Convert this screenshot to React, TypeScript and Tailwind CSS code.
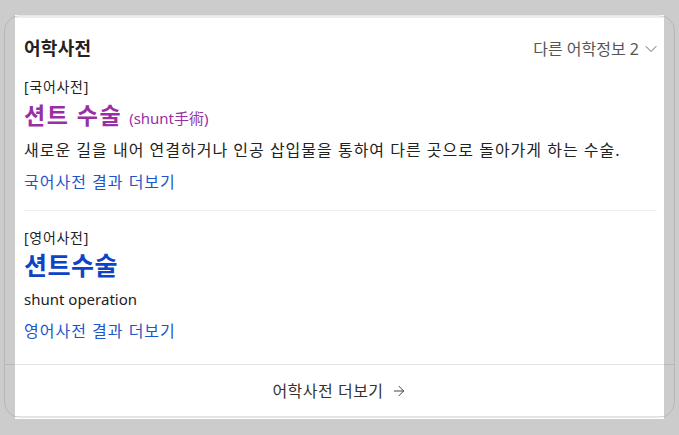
import { ChevronDown, ArrowRight } from 'lucide-react';

const font = { fontFamily: '"Noto Sans", "Noto Sans CJK KR", sans-serif' };

export default function App() {
  return (
    <div className="relative w-[679px] h-[435px] bg-[#cccccc] overflow-hidden" style={font}>
      {/* white card sitting under the rounded frame */}
      <div className="absolute left-[15px] top-[15px] w-[649px] h-[404px] bg-white">
        <div className="mt-[1px] h-[2px] bg-[#ececec]" />
        <div className="absolute left-0 right-0 bottom-[2px] h-[1px] bg-[#e3e3e3]" />
      </div>

      <div className="absolute left-[4px] top-[15px] right-[4px] h-[403px] rounded-[16px] border border-black/10 flex flex-col">
        <div className="flex-1 pl-[19px] pr-[17px]">
          <div className="flex items-center justify-between h-[31px] mt-[17px] -mr-[4px]">
            <h2 className="text-[18px] font-bold text-[#222] tracking-[0.3px]">어학사전</h2>
            <button className="flex items-center gap-[2px] text-[16px] text-[#555]">
              다른 어학정보 2
              <ChevronDown size={20} strokeWidth={1.2} className="text-[#666]" />
            </button>
          </div>

          <section className="pt-[13px] pb-[16px] border-b border-[#eeeeee]">
            <div className="text-[14px] leading-[20px] tracking-[0.7px] text-[#222]">[국어사전]</div>
            <div className="flex items-baseline gap-[7px] mt-[3px]">
              <span className="text-[23px] leading-[30px] font-bold tracking-[1.5px] text-[#982fa3]">션트 수술</span>
              <span className="text-[15px] text-[#982fa3]">(shunt手術)</span>
            </div>
            <p className="mt-[8px] text-[16px] leading-[24px] tracking-[1px] text-[#222]">
              새로운 길을 내어 연결하거나 인공 삽입물을 통하여 다른 곳으로 돌아가게 하는 수술.
            </p>
            <a className="block mt-[8px] text-[16px] leading-[24px] tracking-[1px] text-[#1f55cc]">국어사전 결과 더보기</a>
          </section>

          <section className="pt-[17px]">
            <div className="text-[14px] leading-[20px] tracking-[0.7px] text-[#222]">[영어사전]</div>
            <div className="mt-[1px] text-[25px] leading-[32px] font-bold tracking-[0.5px] text-[#0d43c6]">션트수술</div>
            <p className="mt-[6px] text-[15px] leading-[24px] text-[#222]">shunt operation</p>
            <a className="block mt-[8px] text-[16px] leading-[24px] tracking-[1px] text-[#1f55cc]">영어사전 결과 더보기</a>
          </section>
        </div>

        <div className="h-[53px] border-t border-black/10 flex items-center justify-center gap-[7px] text-[16px] tracking-[0.5px] text-[#333]">
          어학사전 더보기
          <ArrowRight size={16} strokeWidth={1.5} className="text-[#444]" />
        </div>
      </div>
    </div>
  );
}
